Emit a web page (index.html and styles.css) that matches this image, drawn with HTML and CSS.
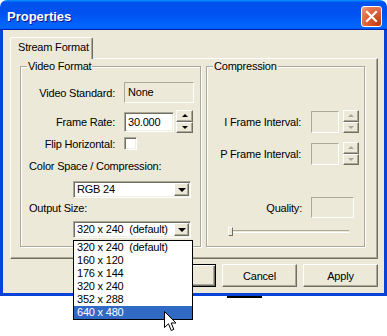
FILE: index.html
```html
<!DOCTYPE html>
<html lang="en">
<head>
    <meta charset="UTF-8">
    <title>Properties</title>
    <link rel="stylesheet" href="styles.css">
</head>
<body>
    <!-- Dialog window -->
    <div class="window">
        <div class="titlebar">
            <span class="title">Properties</span>
            <span class="close">
                <svg width="19" height="19" viewBox="0 0 19 19">
                    <path d="M5 5 L14 14 M14 5 L5 14" stroke="#fff" stroke-width="2.2" stroke-linecap="square"/>
                </svg>
            </span>
        </div>

        <div class="client">
            <div class="tabs">
                <div class="tab">Stream Format</div>
            </div>

            <div class="panel">
                <!-- Left group -->
                <div class="group video">
                    <span class="groupTitle">Video Format</span>

                    <div class="row std">
                        <span class="lbl">Video Standard:</span>
                        <div class="static">None</div>
                    </div>
                    <div class="row rate">
                        <span class="lbl">Frame Rate:</span>
                        <div class="edit">30.000</div>
                        <div class="spin">
                            <span class="spinBtn"><i class="up"></i></span>
                            <span class="spinBtn"><i class="down"></i></span>
                        </div>
                    </div>
                    <div class="row flip">
                        <span class="lbl">Flip Horizontal:</span>
                        <div class="check"></div>
                    </div>

                    <div class="caption colorCaption">Color Space / Compression:</div>
                    <div class="combo colorCombo">
                        <span class="comboText">RGB 24</span>
                        <span class="dropBtn"><i class="down"></i></span>
                    </div>

                    <div class="caption sizeCaption">Output Size:</div>
                    <div class="combo sizeCombo">
                        <span class="comboText">320 x 240  (default)</span>
                        <span class="dropBtn"><i class="down"></i></span>
                        <ul class="dropList">
                            <li>320 x 240  (default)</li>
                            <li>160 x 120</li>
                            <li>176 x 144</li>
                            <li>320 x 240</li>
                            <li>352 x 288</li>
                            <li class="sel">640 x 480</li>
                        </ul>
                    </div>
                </div>

                <!-- Right group (disabled) -->
                <div class="group compression">
                    <span class="groupTitle">Compression</span>

                    <div class="row iframe">
                        <span class="lbl">I Frame Interval:</span>
                        <div class="box small"></div>
                        <div class="spin off">
                            <span class="spinBtn"><i class="up"></i></span>
                            <span class="spinBtn"><i class="down"></i></span>
                        </div>
                    </div>
                    <div class="row pframe">
                        <span class="lbl">P Frame Interval:</span>
                        <div class="box small"></div>
                        <div class="spin off">
                            <span class="spinBtn"><i class="up"></i></span>
                            <span class="spinBtn"><i class="down"></i></span>
                        </div>
                    </div>
                    <div class="row quality">
                        <span class="lbl">Quality:</span>
                        <div class="box wide"></div>
                    </div>

                    <div class="slider">
                        <span class="thumb"></span>
                        <span class="track"></span>
                    </div>
                </div>
            </div>

            <div class="buttons">
                <span class="btn default">OK</span>
                <span class="btn">Cancel</span>
                <span class="btn">Apply</span>
            </div>
        </div>
    </div>

    <!-- Bit of the desktop window behind -->
    <div class="behind"></div>

    <!-- Mouse pointer over the open list -->
    <svg class="pointer" width="13" height="21" viewBox="0 0 13 21">
        <path d="M0.5 0.5 L0.5 16.5 L4.5 12.8 L7.2 19.5 L9.8 18.4 L7.2 12 L12 12 Z" fill="#fff" stroke="#000" stroke-width="1"/>
    </svg>
</body>
</html>
```
FILE: styles.css
```css
/* Base page */
* {
    box-sizing: border-box;
}

body {
    margin: 0;
    width: 387px;
    height: 336px;
    overflow: hidden;
    position: relative;
    background: #fff;
    font-family: "Liberation Sans", Arial, sans-serif;
    font-size: 11px;
    letter-spacing: -0.2px;
    color: #000;
}

/* Window frame */
.window {
    width: 387px;
    height: 296px;
    display: flex;
    flex-direction: column;
}

.titlebar {
    height: 30px;
    flex: none;
    display: flex;
    align-items: center;
    justify-content: space-between;
    padding: 2px 5px 0 7px;
    border-radius: 7px 7px 0 0;
    background: linear-gradient(180deg, #0997ff, #0053ee 8%, #0050ee 40%, #0066ff 88%, #0066ff 93%, #005bff 95%, #0026ac 96%, #0026ac);
}

.title {
    color: #fff;
    font-weight: bold;
    font-size: 13px;
    letter-spacing: 0;
    text-shadow: 1px 1px #0f1089;
}

.close {
    width: 21px;
    height: 21px;
    display: flex;
    align-items: center;
    justify-content: center;
    border: 1px solid #fff;
    border-radius: 3px;
    background: radial-gradient(circle at 85% 85%, #c43c10 0, #dd5a30 45%, #e47a56 75%, #f0a88a 100%);
}

.client {
    flex: 1;
    display: flex;
    flex-direction: column;
    background: #ece9d8;
    border: 3px solid #0842d6;
    border-top: 0;
    padding: 7px 6px 0 7px;
}

/* Tab strip */
.tabs {
    height: 21px;
    display: flex;
    position: relative;
    z-index: 1;
}

.tab {
    width: 83px;
    height: 22px;
    padding: 3px 0 0 7px;
    line-height: 13px;
    background: #ece9d8;
    border-top: 1px solid #fff;
    border-left: 1px solid #fff;
    border-right: 1px solid #716f64;
    border-radius: 2px 2px 0 0;
    box-shadow: inset -1px 0 #aca899;
}

.panel {
    width: 368px;
    height: 201px;
    display: flex;
    gap: 5px;
    padding: 7px 0 0 9px;
    border: 1px solid;
    border-color: #fff #716f64 #716f64 #fff;
    box-shadow: inset -1px -1px #aca899;
}

/* Group boxes */
.group {
    position: relative;
    height: 181px;
    border: 1px solid #aca899;
    box-shadow: inset 1px 1px #fff, 1px 1px #fff;
}

.video {
    width: 181px;
}

.compression {
    width: 159px;
}

.groupTitle {
    position: absolute;
    top: -7px;
    left: 6px;
    padding: 0 1px;
    line-height: 13px;
    background: #ece9d8;
}

.row {
    display: flex;
    align-items: center;
}

.lbl {
    flex: none;
    width: 94px;
    margin-right: 9px;
    text-align: right;
}

/* Sunken fields */
.static {
    width: 70px;
    height: 21px;
    padding-left: 3px;
    line-height: 19px;
    border: 1px solid;
    border-color: #aca899 #fff #fff #aca899;
}

.edit,
.check,
.combo {
    background: #fff;
    border: 1px solid;
    border-color: #aca899 #fff #fff #aca899;
    box-shadow: inset 1px 1px #716f64, inset -1px -1px #f1efe2;
}

.edit {
    width: 50px;
    height: 20px;
    padding-left: 3px;
    line-height: 18px;
}

.check {
    width: 13px;
    height: 13px;
}

.box {
    height: 22px;
    border: 1px solid;
    border-color: #aca899 #fff #fff #aca899;
}

.small {
    width: 28px;
}

.wide {
    width: 43px;
    height: 21px;
}

/* Spin buttons */
.spin {
    width: 17px;
    height: 23px;
    margin-left: 2px;
    display: flex;
    flex-direction: column;
}

.spinBtn,
.dropBtn {
    flex: 1;
    display: flex;
    align-items: center;
    justify-content: center;
    background: #ece9d8;
    border: 1px solid;
    border-color: #fff #716f64 #716f64 #fff;
    box-shadow: inset -1px -1px #aca899;
}

.up {
    border-left: 3px solid transparent;
    border-right: 3px solid transparent;
    border-bottom: 3px solid #000;
}

.down {
    border-left: 3px solid transparent;
    border-right: 3px solid transparent;
    border-top: 3px solid #000;
}

.off {
    width: 16px;
    margin-left: 4px;
}

.off .up {
    border-bottom-color: #aca899;
}

.off .down {
    border-top-color: #aca899;
}

/* Left group layout */
.std {
    margin-top: 15px;
    height: 21px;
}

.rate {
    margin-top: 7px;
    height: 23px;
}

.flip {
    margin-top: 4px;
    height: 13px;
}

.caption {
    line-height: 13px;
    padding-left: 8px;
}

.colorCaption {
    margin-top: 10px;
}

.sizeCaption {
    margin-top: 4px;
}

.combo {
    position: relative;
    width: 118px;
    height: 17px;
    margin-left: 52px;
    display: flex;
    padding: 1px;
}

.colorCombo {
    margin-top: 8px;
}

.sizeCombo {
    margin-top: 6px;
}

.comboText {
    flex: 1;
    padding-left: 2px;
    line-height: 13px;
    white-space: pre;
}

.dropBtn {
    flex: none;
    width: 15px;
}

.dropBtn .down {
    border-left-width: 4px;
    border-right-width: 4px;
    border-top-width: 4px;
}

/* Open list */
.dropList {
    position: absolute;
    top: 18px;
    left: -1px;
    width: 120px;
    margin: 0;
    padding: 0;
    list-style: none;
    background: #fff;
    border: 1px solid #000;
    z-index: 5;
}

.dropList li {
    height: 13px;
    line-height: 13px;
    padding-left: 3px;
    white-space: pre;
}

.dropList .sel {
    background: #316ac5;
    color: #fff;
}

/* Right group layout */
.compression .lbl {
    margin-right: 10px;
}

.iframe {
    margin-top: 43px;
    height: 23px;
}

.pframe {
    margin-top: 9px;
    height: 23px;
}

.quality {
    margin-top: 32px;
    height: 21px;
}

.quality .lbl {
    width: 95px;
    margin-right: 9px;
}

.slider {
    position: relative;
    height: 9px;
    margin: 9px 0 0 21px;
    width: 121px;
}

.track {
    position: absolute;
    left: 0;
    right: 0;
    top: 3px;
    height: 3px;
    border-top: 1px solid #aca899;
    border-bottom: 1px solid #fff;
}

.thumb {
    position: absolute;
    left: 0;
    top: 0;
    width: 5px;
    height: 9px;
    z-index: 1;
    background: #ece9d8;
    border: 1px solid;
    border-color: #fff #716f64 #716f64 #fff;
}

/* Dialog buttons */
.buttons {
    display: flex;
    justify-content: flex-end;
    gap: 6px;
    margin-top: 5px;
}

.btn {
    width: 75px;
    height: 23px;
    display: flex;
    align-items: center;
    justify-content: center;
    background: #ece9d8;
    border: 1px solid;
    border-color: #fff #716f64 #716f64 #fff;
    box-shadow: inset -1px -1px #aca899;
}

.default {
    border-color: #000;
    box-shadow: inset 1px 1px #fff, inset -1px -1px #716f64, inset -2px -2px #aca899;
}

.behind {
    position: absolute;
    left: 227px;
    top: 296px;
    width: 35px;
    height: 2px;
    background: #000;
}

.pointer {
    position: absolute;
    left: 164px;
    top: 311px;
    z-index: 10;
}
```
